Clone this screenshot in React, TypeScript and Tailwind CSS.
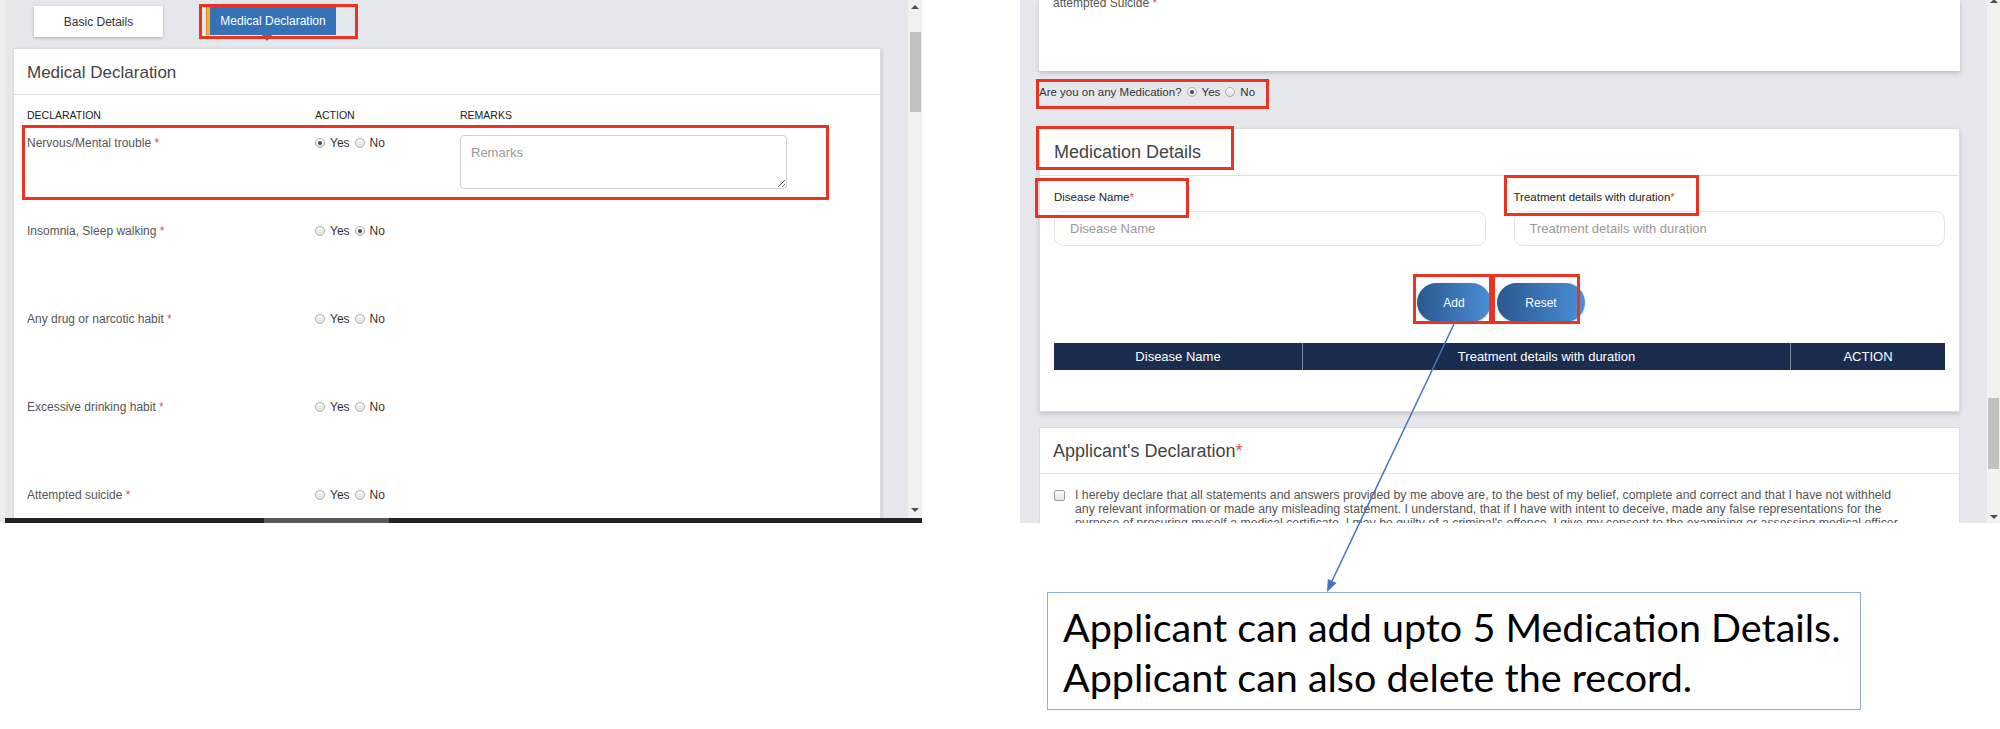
import React from "react";

const SANS = { fontFamily: '"Liberation Sans", Arial, sans-serif' };

function Radio({ checked = false }: { checked?: boolean }) {
  return (
    <span className="relative inline-block w-[10px] h-[10px] shrink-0 rounded-full border border-[#adadad] bg-linear-to-b from-white to-[#dcdcdc]">
      {checked && (
        <span className="absolute left-[2px] top-[2px] w-[4px] h-[4px] rounded-full bg-[#4a4a4a]" />
      )}
    </span>
  );
}

function YesNo({ value }: { value?: "yes" | "no" }) {
  return (
    <div className="flex items-center gap-[5px] text-[12px] leading-[16px] text-[#333]">
      <Radio checked={value === "yes"} />
      <span>Yes</span>
      <Radio checked={value === "no"} />
      <span>No</span>
    </div>
  );
}

function Star() {
  return <span className="text-[#d9534f]">*</span>;
}

function RedBox({ className }: { className: string }) {
  return <span className={"pointer-events-none absolute border-[3px] border-[#ea3323] " + className} />;
}

const rows: { label: string; value?: "yes" | "no"; remarks?: boolean }[] = [
  { label: "Nervous/Mental trouble", value: "yes", remarks: true },
  { label: "Insomnia, Sleep walking", value: "no" },
  { label: "Any drug or narcotic habit" },
  { label: "Excessive drinking habit" },
  { label: "Attempted suicide" },
];

function LeftShot() {
  return (
    <div className="w-[922px] h-[523px] shrink-0 bg-[#e6e7ec] overflow-hidden flex flex-col" style={SANS}>
      <div className="flex flex-1 min-h-0">
        <div className="w-[5px] bg-[#eeeef1]" />
        <div className="flex-1 min-w-0 pl-[8px] pr-[27px] pt-[6px]">
          <div className="flex items-start pl-[21px] h-[42px]">
            <div className="w-[129px] h-[31px] bg-white shadow-[0_1px_3px_rgba(0,0,0,0.25)] flex items-center justify-center text-[12px] text-[#333]">
              Basic Details
            </div>
            <div className="relative ml-[43px] mt-[1px] w-[130px] h-[28px] bg-[#3572b6] flex">
              <span className="w-[4px] bg-[#f2b035] border-l border-l-[#e48b20]" />
              <span className="flex-1 flex items-center justify-center text-white text-[12px]">Medical Declaration</span>
              <span className="absolute left-[56px] top-[28px] w-0 h-0 border-x-[5px] border-x-transparent border-t-[6px] border-t-[#3572b6]" />
              <RedBox className="left-[-7px] top-[-3px] w-[159px] h-[35px]" />
            </div>
          </div>
          <div className="bg-white border border-[#dcdcdc] shadow-[1px_1px_3px_rgba(0,0,0,0.12)] h-[600px]">
            <div className="h-[46px] pt-[2px] border-b border-[#dedede] flex items-center px-[13px] text-[17px] text-[#444]">
              Medical Declaration
            </div>
            <div className="pl-[13px]">
              <div className="flex pt-[14px] text-[10.5px] leading-[13px] text-[#222]">
                <div className="w-[288px]">DECLARATION</div>
                <div className="w-[145px]">ACTION</div>
                <div>REMARKS</div>
              </div>
              <div className="relative mt-[13px]">
                <RedBox className="left-[-5px] top-[-10px] w-[807px] h-[75px]" />
                {rows.map((r) => (
                  <div key={r.label} className="flex h-[88px]">
                    <div className="w-[288px] text-[12px] leading-[16px] text-[#555]">
                      {r.label} <Star />
                    </div>
                    <div className="w-[145px]">
                      <YesNo value={r.value} />
                    </div>
                    {r.remarks && (
                      <textarea
                        readOnly
                        placeholder="Remarks"
                        className="w-[327px] h-[54px] rounded-[4px] border border-[#cfcfcf] px-[10px] pt-[7px] text-[13px] text-[#333] placeholder:text-[#999] outline-none"
                        style={SANS}
                      />
                    )}
                  </div>
                ))}
              </div>
            </div>
          </div>
        </div>
        <div className="w-[14px] bg-[#f1f1f1] flex flex-col items-center">
          <span className="mt-[5px] w-0 h-0 border-x-[4px] border-x-transparent border-b-[4px] border-b-[#505050]" />
          <span className="mt-[23px] w-[11px] h-[80px] bg-[#c1c1c1]" />
          <span className="flex-1" />
          <span className="mb-[6px] w-0 h-0 border-x-[4px] border-x-transparent border-t-[4px] border-t-[#505050]" />
        </div>
      </div>
      <div className="h-[5px] ml-[5px] bg-[#222] flex">
        <span className="ml-[259px] w-[125px] bg-[#585858]" />
      </div>
    </div>
  );
}

function RightShot() {
  return (
    <div className="w-[980px] h-[523px] shrink-0 bg-[#e6e7ec] overflow-hidden flex" style={SANS}>
      <div className="flex-1 min-w-0 pl-[19px] pr-[27px]">
        <div className="h-[71px] bg-white shadow-[0_2px_4px_rgba(0,0,0,0.18)] pl-[14px] flex flex-col">
          <div className="-mt-[4px] text-[12px] leading-[14px] text-[#555]">
            attempted Suicide <Star />
          </div>
        </div>
        <div className="relative mt-[13px] flex items-center gap-[5px] text-[11.5px] leading-[16px] text-[#333] w-fit">
          <span>Are you on any Medication?</span>
          <Radio checked />
          <span>Yes</span>
          <Radio />
          <span>No</span>
          <RedBox className="left-[-3px] top-[-5px] w-[233px] h-[30px]" />
        </div>
        <div className="relative mt-[28px] bg-white border border-[#dcdcdc] shadow-[0_2px_4px_rgba(0,0,0,0.15)]">
          <div className="h-[47px] pt-[1px] border-b border-[#dedede] flex items-center px-[14px] text-[18px] text-[#444]">
            Medication Details
          </div>
          <RedBox className="left-[-4px] top-[-3px] w-[198px] h-[44px]" />
          <div className="px-[14px] pt-[14px] pb-[41px]">
            <div className="grid grid-cols-2 gap-x-[28px]">
              <div>
                <div className="relative text-[11.5px] leading-[14px] text-[#222]">
                  Disease Name<span className="text-[#d9534f]">*</span>
                  <RedBox className="left-[-19px] top-[-12px] w-[154px] h-[40px]" />
                </div>
                <div className="mt-[7px] h-[35px] pt-[1px] rounded-[9px] border border-[#e3e3e3] px-[15px] flex items-center text-[13px] text-[#999]">
                  Disease Name
                </div>
              </div>
              <div>
                <div className="relative text-[11.5px] leading-[14px] text-[#222]">
                  Treatment details with duration<span className="text-[#d9534f]">*</span>
                  <RedBox className="left-[-10px] top-[-15px] w-[195px] h-[41px]" />
                </div>
                <div className="mt-[7px] h-[35px] pt-[1px] rounded-[9px] border border-[#e3e3e3] px-[15px] flex items-center text-[13px] text-[#999]">
                  Treatment details with duration
                </div>
              </div>
            </div>
            <div className="mt-[37px] flex justify-center gap-[6px] pl-[3px]">
              <div className="relative w-[74px] h-[39px] rounded-full bg-linear-to-r from-[#2a5890] to-[#4b8fd6] shadow-[0_1px_2px_rgba(0,0,0,0.2)] flex items-center justify-center text-white text-[12px]">
                Add
                <RedBox className="left-[-4px] top-[-9px] w-[79px] h-[50px]" />
              </div>
              <div className="relative w-[88px] h-[39px] rounded-full bg-linear-to-r from-[#2a5890] to-[#4b8fd6] shadow-[0_1px_2px_rgba(0,0,0,0.2)] flex items-center justify-center text-white text-[12px]">
                Reset
                <RedBox className="left-[-5px] top-[-9px] w-[88px] h-[50px]" />
              </div>
            </div>
            <div className="mt-[21px] h-[27px] flex bg-[#1b2d4f] text-white text-[13px]">
              <div className="w-[248px] flex items-center justify-center">Disease Name</div>
              <div className="w-[488px] border-l border-[#7d8aa3] flex items-center justify-center">
                Treatment details with duration
              </div>
              <div className="flex-1 border-l border-[#7d8aa3] flex items-center justify-center">ACTION</div>
            </div>
          </div>
        </div>
        <div className="mt-[15px] bg-white border border-[#dcdcdc] h-[200px]">
          <div className="h-[46px] pt-[1px] border-b border-[#dedede] flex items-center px-[13px] text-[18px] text-[#444]">
            Applicant's Declaration<span className="text-[#d9534f]">*</span>
          </div>
          <div className="px-[14px] pt-[14px] flex">
            <span className="mt-[2px] w-[11px] h-[11px] shrink-0 rounded-[2px] border border-[#9a9a9a] bg-linear-to-b from-white to-[#e3e3e3]" />
            <div className="ml-[10px] text-[12.3px] leading-[14px] text-[#555] whitespace-nowrap">
              <div>
                I hereby declare that all statements and answers provided by me above are, to the best of my belief, complete and correct and that I have not withheld
              </div>
              <div>
                any relevant information or made any misleading statement. I understand, that if I have with intent to deceive, made any false representations for the
              </div>
              <div>
                purpose of procuring myself a medical certificate, I may be guilty of a criminal's offence. I give my consent to the examining or assessing medical officer
              </div>
            </div>
          </div>
        </div>
      </div>
      <div className="w-[13px] bg-[#f1f1f1] flex flex-col items-center">
        <span className="mt-[-1px] w-0 h-0 border-x-[4px] border-x-transparent border-b-[4px] border-b-[#505050]" />
        <span className="mt-[395px] w-[11px] h-[71px] bg-[#c1c1c1]" />
        <span className="flex-1" />
        <span className="mb-[4px] w-0 h-0 border-x-[4px] border-x-transparent border-t-[4px] border-t-[#505050]" />
      </div>
    </div>
  );
}

export default function App() {
  return (
    <div className="relative w-[2000px] h-[729px] bg-white overflow-hidden">
      <div className="flex gap-[98px]">
        <LeftShot />
        <RightShot />
      </div>
      <div
        className="mt-[69px] ml-[1047px] w-[814px] h-[118px] border-[1.5px] border-[#8faadc] pl-[15px] pt-[9px] text-[39.5px] leading-[50px] text-black"
        style={{ fontFamily: 'Lato, "Open Sans", sans-serif' }}
      >
        <div>Applicant can add upto 5 Medication Details.</div>
        <div>Applicant can also delete the record.</div>
      </div>
      <svg className="pointer-events-none absolute left-0 top-0" width="2000" height="729" viewBox="0 0 2000 729">
        <line x1="1454" y1="324" x2="1332" y2="581" stroke="#4472c4" strokeWidth="1.5" />
        <polygon points="1327,592 1336.5,583 1327.8,579" fill="#4472c4" />
      </svg>
    </div>
  );
}
